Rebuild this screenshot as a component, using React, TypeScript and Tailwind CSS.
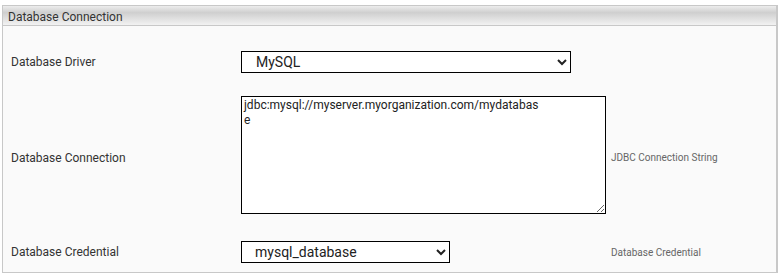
import React from "react";

const font = { fontFamily: "Roboto, 'Liberation Sans', sans-serif" };

function Row({
  label,
  help,
  children,
  className = "",
  textOffset = "",
}: {
  label: string;
  help?: string;
  children: React.ReactNode;
  className?: string;
  textOffset?: string;
}) {
  return (
    <div className={`flex items-center ${className}`}>
      <div className={`w-[238px] pl-[8px] text-[12px] text-[#333] ${textOffset}`}>{label}</div>
      <div className="w-[367px] shrink-0">{children}</div>
      {help && <div className={`pl-[3px] text-[10px] text-[#666] ${textOffset}`}>{help}</div>}
    </div>
  );
}

export default function App() {
  return (
    <div className="bg-white w-[780px] h-[278px] pt-[5px] pl-[2px]" style={font}>
      <section className="w-[776px] border border-r-2 border-[#c8c8c8] bg-[#fafafa]">
        {/* Header */}
        <header className="h-[20px] border-b border-[#c8c8c8] bg-[linear-gradient(to_bottom,#ededed,#cfcfcf_35%,#f2f2f2)] pl-[5px] pt-[3px] text-[12px] leading-[16px] text-[#333]">
          Database Connection
        </header>

        <div className="pt-[25px] pb-[9px]">
          <Row label="Database Driver" className="h-[22px]">
            <select
              defaultValue="mysql"
              className="block w-[330px] h-[22px] border border-black bg-white pl-[10px] text-[14px] text-[#222] rounded-none"
              style={font}
            >
              <option value="mysql">MySQL</option>
              <option value="oracle">Oracle</option>
              <option value="postgres">PostgreSQL</option>
            </select>
          </Row>

          <Row
            label="Database Connection"
            help="JDBC Connection String"
            className="mt-[23px] h-[118px]"
            textOffset="mt-[5px]"
          >
            <textarea
              defaultValue="jdbc:mysql://myserver.myorganization.com/mydatabase"
              className="block w-[365px] h-[118px] border border-black bg-white pl-[2px] pr-[64px] pt-[1px] text-[12px] leading-[15px] text-[#222] resize-y"
              style={font}
            />
          </Row>

          <Row label="Database Credential" help="Database Credential" className="mt-[27px] h-[22px]">
            <select
              defaultValue="mysql_database"
              className="block w-[209px] h-[22px] border border-black bg-white pl-[9px] text-[14px] text-[#222] rounded-none"
              style={font}
            >
              <option value="mysql_database">mysql_database</option>
              <option value="oracle_database">oracle_database</option>
            </select>
          </Row>
        </div>
      </section>
    </div>
  );
}
